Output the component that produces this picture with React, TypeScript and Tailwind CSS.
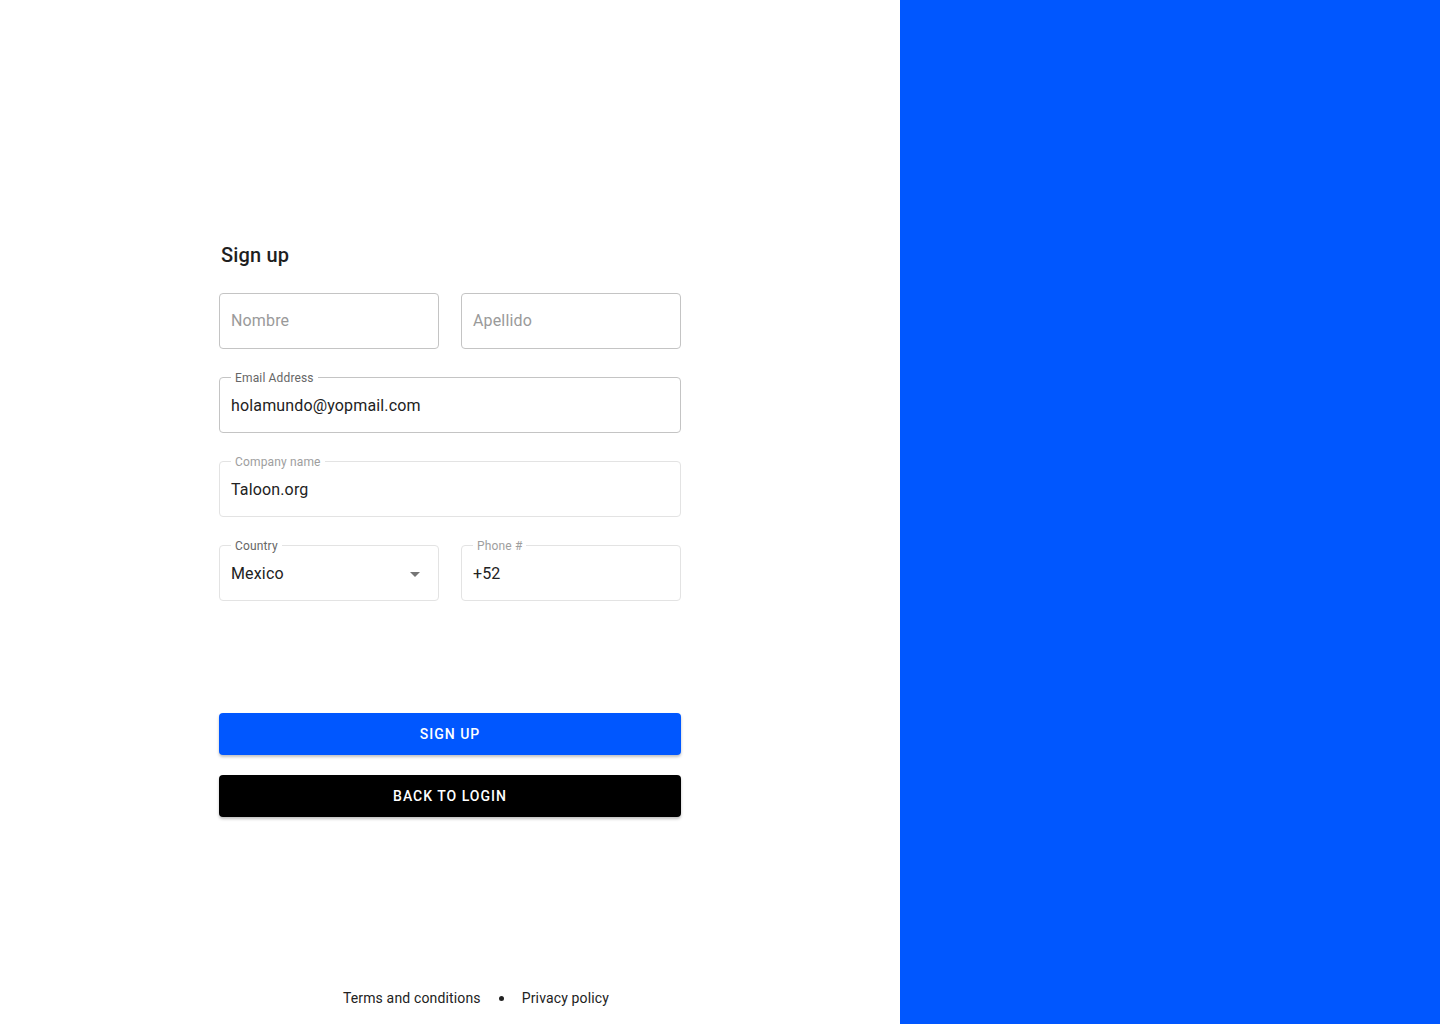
import React from "react";

function Field({
  label,
  value,
  placeholder,
  muted,
  labelDark,
  select,
}: {
  label?: string;
  value?: string;
  placeholder?: string;
  muted?: boolean;
  labelDark?: boolean;
  select?: boolean;
}) {
  const dark = labelDark ?? !muted;
  return (
    <div
      className={`relative h-[56px] rounded-[4px] border flex items-center px-[11px] ${label ? "pt-[2px]" : ""} ${
        muted ? "border-[#e3e3e3]" : "border-[#c4c4c4]"
      }`}
    >
      {label && (
        <span
          className={`absolute left-[11px] top-[-8px] bg-white px-[4px] text-[12px] leading-[16px] tracking-[0.15px] ${
            dark ? "text-[#666666]" : "text-[#9e9e9e]"
          }`}
        >
          {label}
        </span>
      )}
      {value ? (
        <span className="text-[16px] text-[#222222] leading-[24px] tracking-[0.15px]">{value}</span>
      ) : (
        <span className="text-[16px] text-[#9a9a9a] leading-[24px] tracking-[0.15px]">{placeholder}</span>
      )}
      {select && (
        <svg className="absolute right-[18px] top-[26px]" width="10" height="5" viewBox="0 0 10 5">
          <path d="M0 0L5 5L10 0Z" fill="#757575" />
        </svg>
      )}
    </div>
  );
}

export default function App() {
  return (
    <div className="flex w-full h-[1024px] font-['Roboto',_'Liberation_Sans',_sans-serif]">
      <div className="w-[900px] h-full bg-white flex flex-col items-center">
        <div className="w-[462px] pt-[242px]">
          <h1 className="pl-[2px] text-[20px] leading-[26px] font-medium tracking-[0.15px] text-[#1f1f1f]">
            Sign up
          </h1>
          <div className="mt-[25px] grid grid-cols-2 gap-x-[22px]">
            <Field placeholder="Nombre" />
            <Field placeholder="Apellido" />
          </div>
          <div className="mt-[28px]">
            <Field label="Email Address" value="holamundo@yopmail.com" />
          </div>
          <div className="mt-[28px]">
            <Field label="Company name" value="Taloon.org" muted />
          </div>
          <div className="mt-[28px] grid grid-cols-2 gap-x-[22px]">
            <Field label="Country" value="Mexico" select muted labelDark />
            <Field label="Phone #" value="+52" muted />
          </div>
          <button className="mt-[112px] w-full h-[42px] rounded-[4px] bg-[#0057ff] text-white text-[14px] font-medium tracking-[1px] uppercase shadow-[0_2px_3px_rgba(0,0,0,0.25)]">
            Sign up
          </button>
          <button className="mt-[20px] w-full h-[42px] rounded-[4px] bg-black text-white text-[14px] font-medium tracking-[1px] uppercase shadow-[0_2px_3px_rgba(0,0,0,0.25)]">
            Back to login
          </button>
        </div>
        <div className="mt-auto mb-[15px] pl-[52px] flex items-center gap-[18px] text-[14px] tracking-[0.15px] text-[#222222]">
          <span>Terms and conditions</span>
          <span className="w-[5px] h-[5px] rounded-full bg-[#222222]" />
          <span>Privacy policy</span>
        </div>
      </div>
      <div className="flex-1 h-full bg-[#0057ff]" />
    </div>
  );
}
